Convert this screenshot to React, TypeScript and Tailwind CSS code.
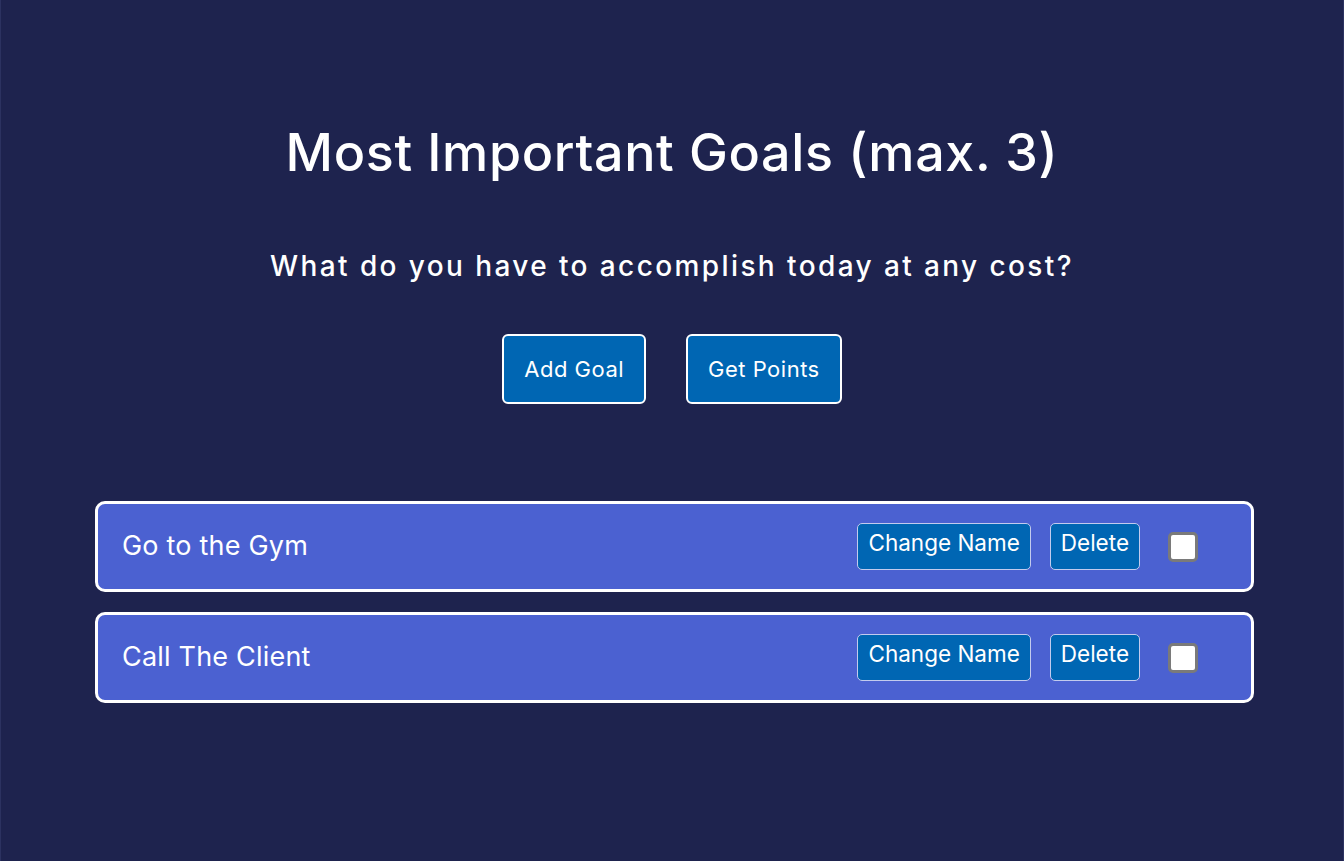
import React from "react";

const goals = ["Go to the Gym", "Call The Client"];

export default function App() {
  return (
    <div
      className="min-h-screen w-full bg-[#1e234e] border-x border-[#2c3260] text-white"
      style={{ fontFamily: "Inter, 'Noto Sans', sans-serif" }}
    >
      <div className="flex flex-col items-center pt-[121px]">
        <h1 className="text-[52px] leading-[64px] font-medium tracking-[0.65px]">
          Most Important Goals (max. 3)
        </h1>
        <h2 className="mt-[63px] text-[28px] leading-[36px] font-medium tracking-[2.4px]">
          What do you have to accomplish today at any cost?
        </h2>
        <div className="mt-[50px] flex gap-[40px]">
          <button className="h-[70px] px-[20px] rounded-[6px] border-2 border-white bg-[#0066b3] text-[22px] tracking-[0.5px]">
            Add Goal
          </button>
          <button className="h-[70px] px-[20px] rounded-[6px] border-2 border-white bg-[#0066b3] text-[22px] tracking-[0.5px]">
            Get Points
          </button>
        </div>
      </div>
      <div className="mt-[97px] ml-[94px] mr-[89px] flex flex-col gap-[20px]">
        {goals.map((g) => (
          <div
            key={g}
            className="h-[91px] rounded-[10px] border-[3px] border-white bg-[#4b61d1] flex items-center pl-[24px] pr-[53px]"
          >
            <span className="flex-1 text-[27px] tracking-[0.2px]">{g}</span>
            <div className="flex items-center gap-[19px]">
              <button className="h-[47px] px-[10px] pb-[8px] rounded-[5px] border border-[#c3cbee] bg-[#0066b3] text-[22.5px]">
                Change Name
              </button>
              <button className="h-[47px] px-[10px] pb-[8px] rounded-[5px] border border-[#c3cbee] bg-[#0066b3] text-[22.5px]">
                Delete
              </button>
              <div className="ml-[9px] w-[30px] h-[30px] rounded-[5px] border-[3px] border-[#7a7a7a] bg-white" />
            </div>
          </div>
        ))}
      </div>
    </div>
  );
}
